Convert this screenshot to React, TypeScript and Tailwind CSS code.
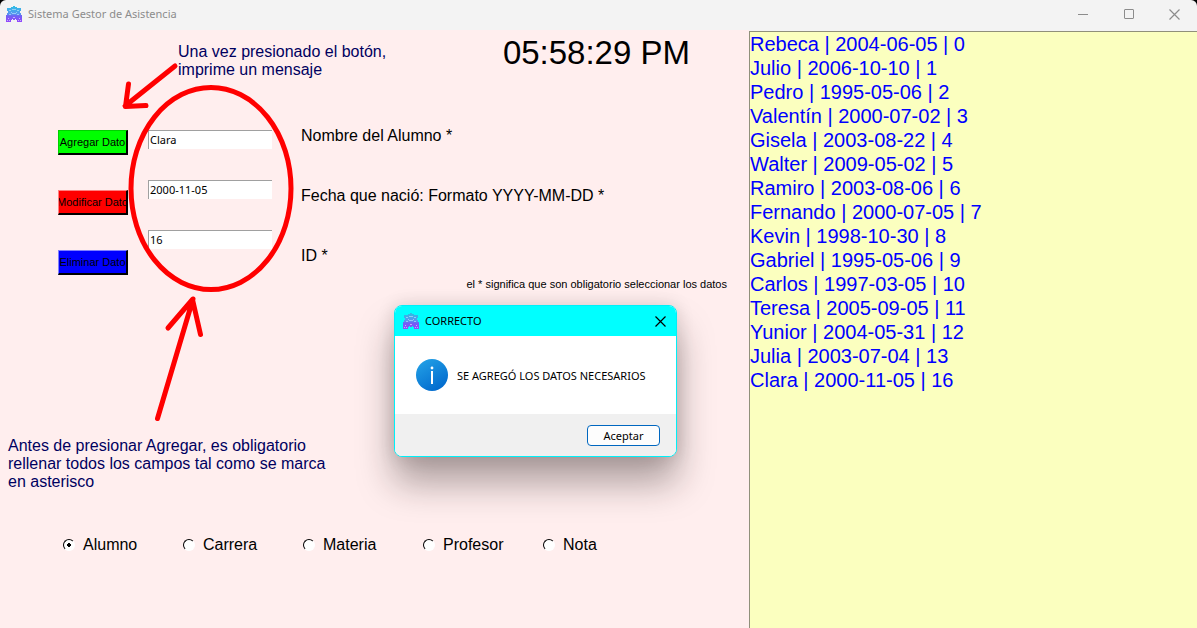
import { useState } from "react";

const students = [
  "Rebeca | 2004-06-05 | 0",
  "Julio | 2006-10-10 | 1",
  "Pedro | 1995-05-06 | 2",
  "Valentín | 2000-07-02 | 3",
  "Gisela | 2003-08-22 | 4",
  "Walter | 2009-05-02 | 5",
  "Ramiro | 2003-08-06 | 6",
  "Fernando | 2000-07-05 | 7",
  "Kevin | 1998-10-30 | 8",
  "Gabriel | 1995-05-06 | 9",
  "Carlos | 1997-03-05 | 10",
  "Teresa | 2005-09-05 | 11",
  "Yunior | 2004-05-31 | 12",
  "Julia | 2003-07-04 | 13",
  "Clara | 2000-11-05 | 16",
];

const fields = [
  { id: "nombre", label: "Nombre del Alumno *", value: "Clara" },
  { id: "fecha", label: "Fecha que nació: Formato YYYY-MM-DD *", value: "2000-11-05" },
  { id: "numero", label: "ID *", value: "16" },
];

const actions = [
  { text: "Agregar Dato", look: "bg-[#00ff00] border-t-[#00d000] border-l-[#00d000]" },
  { text: "Modificar Dato", look: "bg-[#ff0000] border-t-[#ff8080] border-l-[#ff8080]" },
  { text: "Eliminar Dato", look: "bg-[#0000ff] border-t-[#8080ff] border-l-[#8080ff]" },
];

const sections = ["Alumno", "Carrera", "Materia", "Profesor", "Nota"];

function AppIcon() {
  return (
    <svg viewBox="0 0 16 16" className="size-4 shrink-0" aria-hidden="true">
      <defs>
        <linearGradient id="roof" x1="0" y1="0" x2="0" y2="1">
          <stop offset="0" stopColor="#2cc0e4" />
          <stop offset="0.5" stopColor="#5a94f0" />
          <stop offset="0.62" stopColor="#7060f4" />
          <stop offset="1" stopColor="#9448fc" />
        </linearGradient>
      </defs>
      <path
        d="M7 0h2v1h2v1h4v3h-1v2h1v2h1v7h-5v-2h-1v-1H9v1H7v-1H6v1H5v2H0V9h1V7h1V5H1V2h4V1h2z"
        fill="url(#roof)"
      />
      <path
        d="M6 3h4v1H6zM3 4h2v1H3zM11 4h2v1h-2zM5 6h1v1H5zM10 6h1v1h-1zM6 7h4v1H6zM3 8h2v1H3zM11 8h2v1h-2z"
        fill="#a8dcfa"
        opacity="0.75"
      />
      <path d="M2 12h1v1H2zM13 12h1v1h-1zM1 14h1v1H1zM3 14h1v1H3zM12 14h1v1h-1zM14 14h1v1h-1zM7 11h2v1H7z" fill="#d4c4fc" opacity="0.8" />
    </svg>
  );
}

function CrossIcon() {
  return (
    <svg viewBox="0 0 11 11" className="size-[11px]" fill="none" stroke="currentColor" strokeWidth="1.2" aria-hidden="true">
      <path d="M.5 .5l10 10M10.5 .5l-10 10" />
    </svg>
  );
}

function TitleBar() {
  return (
    <header className="flex h-[30px] shrink-0 items-start justify-between rounded-t-md bg-[#f3f3f3] pl-1.5 text-[#8c8c8c]">
      <div className="flex h-7 items-center gap-1.5">
        <AppIcon />
        <h1 className="font-['Noto_Sans',sans-serif] text-[11px] leading-4">Sistema Gestor de Asistencia</h1>
      </div>
      <div className="flex">
        <button type="button" aria-label="Minimizar" className="flex h-7 w-[46px] items-center justify-center">
          <svg viewBox="0 0 10 10" className="size-2.5" stroke="currentColor" aria-hidden="true">
            <path d="M0 5.5h10" />
          </svg>
        </button>
        <button type="button" aria-label="Maximizar" className="flex h-7 w-[46px] items-center justify-center">
          <svg viewBox="0 0 10 10" className="size-2.5" fill="none" stroke="currentColor" aria-hidden="true">
            <rect x=".5" y=".5" width="9" height="9" rx="0.5" />
          </svg>
        </button>
        <button type="button" aria-label="Cerrar" className="flex h-7 w-[45px] items-center justify-center">
          <CrossIcon />
        </button>
      </div>
    </header>
  );
}

function MessageDialog() {
  return (
    <section
      role="dialog"
      aria-labelledby="dialog-title"
      className="absolute top-[275px] left-[394px] w-[283px] overflow-hidden rounded-lg border border-[#00f0f8] bg-white font-['Noto_Sans',sans-serif] text-[11px] leading-4 text-black shadow-[0_26px_36px_rgba(30,20,20,0.36),0_0_18px_rgba(30,20,20,0.14)]"
    >
      <div className="flex h-[30px] items-center justify-between bg-[#00ffff] pr-2.5 pl-2">
        <div className="flex items-center gap-1.5">
          <AppIcon />
          <h2 id="dialog-title">CORRECTO</h2>
        </div>
        <button type="button" aria-label="Cerrar mensaje">
          <CrossIcon />
        </button>
      </div>
      <div className="flex h-[78px] items-center gap-[9px] pl-[21px]">
        <svg viewBox="0 0 32 32" className="size-8 shrink-0" aria-hidden="true">
          <defs>
            <linearGradient id="info" x1="0.2" y1="0" x2="0.8" y2="1">
              <stop offset="0" stopColor="#22a0e6" />
              <stop offset="1" stopColor="#0067cc" />
            </linearGradient>
          </defs>
          <circle cx="16" cy="16" r="16" fill="url(#info)" />
          <circle cx="16" cy="9" r="1.4" fill="#fff" />
          <path d="M16 12v13" stroke="#fff" strokeWidth="2" />
        </svg>
        <p className="pt-0.5 whitespace-nowrap">SE AGREGÓ LOS DATOS NECESARIOS</p>
      </div>
      <div className="flex h-[42px] items-center justify-end bg-[#f0f0f0] pr-4">
        <button type="button" className="h-[21px] w-[73px] rounded border border-[#0067c0] bg-[#fdfdfd] pt-px">
          Aceptar
        </button>
      </div>
    </section>
  );
}

function Annotations() {
  return (
    <svg
      viewBox="0 0 400 440"
      className="pointer-events-none absolute top-0 left-0 h-[440px] w-[400px]"
      fill="none"
      stroke="#ff0000"
      strokeWidth="5"
      strokeLinecap="round"
      strokeLinejoin="round"
      aria-hidden="true"
    >
      <ellipse cx="211" cy="158.500" rx="80" ry="101" />
      <path d="M175 36L125 76M128.500 54L125.500 76.500L146 75.500" />
      <path d="M157.500 388.500L193 269M168 298L192.500 269.500L200.500 304.500" />
    </svg>
  );
}

export default function App() {
  const [section, setSection] = useState("Alumno");

  return (
    <div className="flex min-h-screen flex-col bg-black font-['Liberation_Sans',Arial,sans-serif]">
      <TitleBar />
      <div className="flex grow">
        <main className="relative min-w-0 flex-1 bg-[#ffeeee]">
          <div className="flex h-[95px] items-start justify-between pr-[59px] pl-[178px]">
            <p className="w-[220px] pt-[13px] text-base leading-[18px] text-[#000060]">
              Una vez presionado el botón, imprime un mensaje
            </p>
            <time className="pt-[5px] text-[33px] leading-9 whitespace-nowrap text-black">05:58:29 PM</time>
          </div>

          <form className="flex pl-[58px]" onSubmit={(e) => e.preventDefault()}>
            <div className="flex w-[70px] flex-col gap-[35px] pt-[5px]">
              {actions.map((a) => (
                <button
                  key={a.text}
                  type="button"
                  className={`flex h-[25px] items-center justify-center overflow-hidden border border-r-2 border-b-2 border-r-black border-b-black text-[11px] whitespace-nowrap text-black ${a.look}`}
                >
                  {a.text}
                </button>
              ))}
            </div>
            <div className="ml-5 flex w-[124px] flex-col gap-[31px] pt-[5px]">
              {fields.map((f) => (
                <input
                  key={f.id}
                  id={f.id}
                  type="text"
                  defaultValue={f.value}
                  className="h-[19px] border-t border-l border-[#a0a0a0] bg-white pb-0.5 pl-px font-['Noto_Sans',sans-serif] text-[11px] leading-4 text-black outline-none"
                />
              ))}
            </div>
            <div className="ml-[29px] flex flex-col gap-[42px] pt-0.5 text-base leading-[18px] text-black">
              {fields.map((f) => (
                <label key={f.id} htmlFor={f.id} className="whitespace-nowrap">
                  {f.label}
                </label>
              ))}
            </div>
          </form>

          <p className="pt-px pr-[22px] text-right text-[11px] leading-4 text-black">
            el * significa que son obligatorio seleccionar los datos
          </p>

          <p className="mt-[145px] ml-2 w-[330px] text-base leading-[18px] text-[#000060]">
            Antes de presionar Agregar, es obligatorio rellenar todos los campos tal como se marca en asterisco
          </p>

          <fieldset className="mt-11 flex pl-[63px] text-base leading-5 text-black">
            {sections.map((s) => (
              <label key={s} className="flex w-[120px] items-center gap-2">
                <input
                  type="radio"
                  name="seccion"
                  checked={section === s}
                  onChange={() => setSection(s)}
                  className="size-3 appearance-none rounded-full border border-t-black border-r-white border-b-white border-l-black bg-white checked:bg-[radial-gradient(circle,#000_2px,#fff_2px)]"
                />
                {s}
              </label>
            ))}
          </fieldset>

          <Annotations />
          <MessageDialog />
        </main>

        <aside className="flex w-[448px] shrink-0 flex-col bg-[#f3f3f3] pt-px">
          <ul className="grow border-t border-l border-[#90907a] bg-[#fbffbf] text-xl leading-6 text-[#0000ff]">
            {students.map((s) => (
              <li key={s}>{s}</li>
            ))}
          </ul>
        </aside>
      </div>
    </div>
  );
}
